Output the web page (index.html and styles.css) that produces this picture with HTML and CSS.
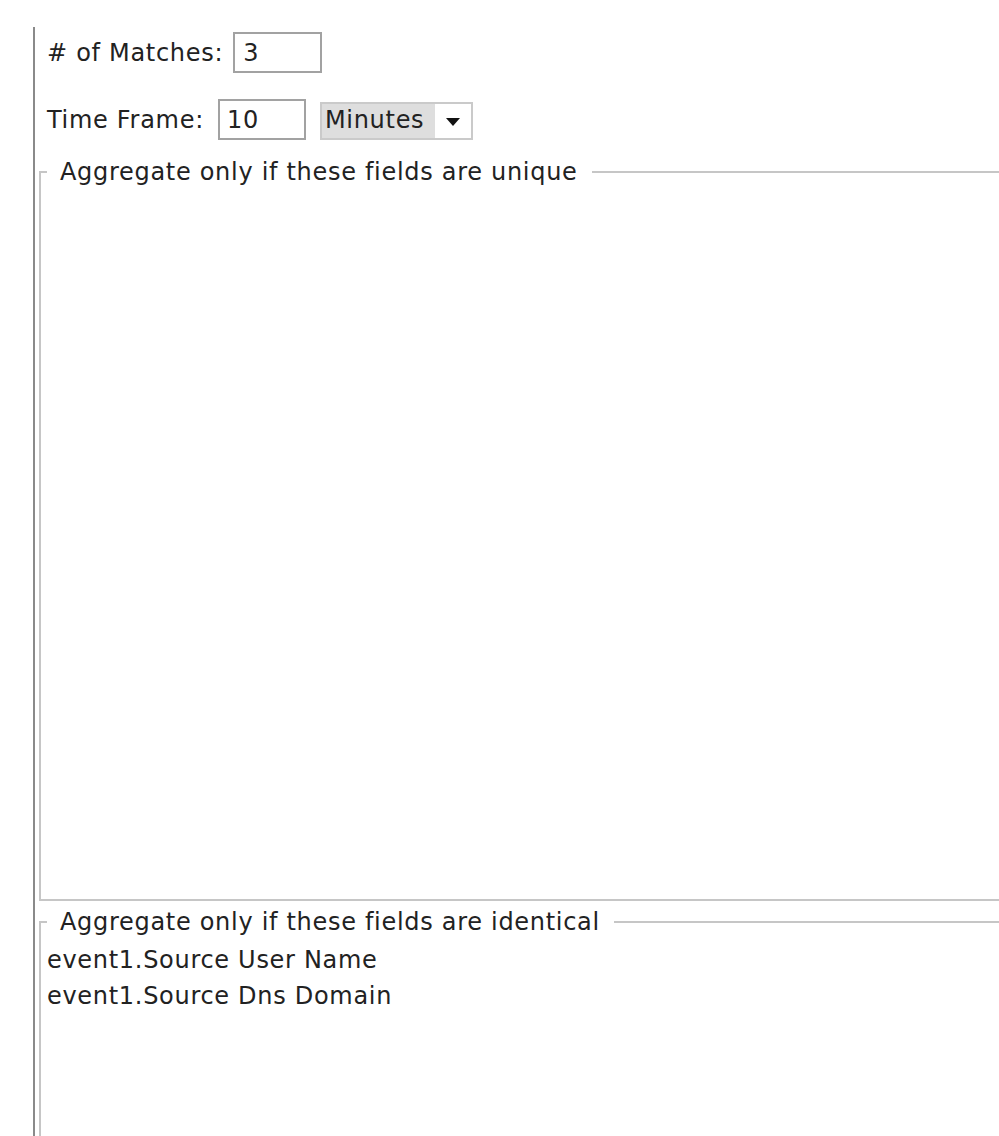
FILE: index.html
```html
<!DOCTYPE html>
<html>
<head>
<meta charset="utf-8">
<link rel="stylesheet" href="styles.css">
</head>
<body>
<div class="frame">
  <div class="row row-first">
    <span class="label">#&nbsp;of Matches:</span>
    <div class="field field-matches">3</div>
  </div>
  <div class="row row-second">
    <span class="label">Time Frame:</span>
    <div class="field field-time">10</div>
    <div class="combo">
      <span class="combo-value">Minutes</span>
      <span class="combo-arrow"><svg width="14" height="8" viewBox="0 0 14 8"><polygon points="0,0 14,0 7,8" fill="#111"/></svg></span>
    </div>
  </div>
  <div class="group group-unique">
    <div class="group-title">
      <span class="tick"></span>
      <span class="title-text">Aggregate only if these fields are unique</span>
      <span class="rule"></span>
    </div>
    <div class="group-body body-unique"></div>
  </div>
  <div class="group group-identical">
    <div class="group-title">
      <span class="tick"></span>
      <span class="title-text">Aggregate only if these fields are identical</span>
      <span class="rule"></span>
    </div>
    <div class="group-body body-identical">
      <div class="item">event1.Source User Name</div>
      <div class="item">event1.Source Dns Domain</div>
    </div>
  </div>
</div>
</body>
</html>
```
FILE: styles.css
```css
html, body {
  margin: 0;
  padding: 0;
  background: #ffffff;
}
body {
  height: 1136px;
  overflow: hidden;
  padding-top: 27px;
  box-sizing: border-box;
  font-family: "DejaVu Sans", "Liberation Sans", sans-serif;
  font-size: 24px;
  line-height: 28px;
  letter-spacing: 0.7px;
  color: #222222;
}
.frame {
  margin-left: 33px;
  border-left: 2px solid #8a8a8a;
  height: 1109px;
  display: flex;
  flex-direction: column;
}
.row {
  display: flex;
  align-items: baseline;
  padding-left: 12px;
}
.row-first {
  margin-top: 5px;
}
.row-second {
  margin-top: 26px;
}
.label {
  white-space: nowrap;
}
.field {
  box-sizing: border-box;
  height: 41px;
  border: 2px solid #a2a2a2;
  padding: 5px 7px 4px 8px;
  background: #ffffff;
}
.field-matches {
  width: 89px;
  margin-left: 10px;
}
.field-time {
  width: 88px;
  margin-left: 14px;
  padding-left: 7px;
}
.combo {
  align-self: flex-end;
  box-sizing: border-box;
  width: 153px;
  height: 38px;
  margin-left: 14px;
  border: 2px solid #cacaca;
  display: flex;
}
.combo-value {
  flex: 1;
  background: #dedede;
  padding: 2px 0 4px 3px;
}
.combo-arrow {
  width: 36px;
  display: flex;
  align-items: center;
  justify-content: center;
  background: #ffffff;
}
.combo-arrow svg {
  display: block;
  margin-top: 1px;
}
.group {
  margin-left: 4px;
  display: flex;
  flex-direction: column;
}
.group-unique {
  margin-top: 18px;
}
.group-identical {
  margin-top: 7px;
  flex: 1;
}
.group-title {
  display: flex;
  align-items: stretch;
  height: 28px;
}
.tick {
  width: 6px;
  margin-top: 13px;
  border-top: 2px solid #c6c6c6;
  border-left: 2px solid #c6c6c6;
}
.title-text {
  padding-left: 13px;
  padding-right: 14px;
  white-space: nowrap;
}
.rule {
  flex: 1;
  align-self: center;
  height: 2px;
  background: #c6c6c6;
}
.group-body {
  border-left: 2px solid #c6c6c6;
}
.body-unique {
  height: 713px;
  border-bottom: 2px solid #c6c6c6;
}
.body-identical {
  flex: 1;
  padding-top: 6px;
  padding-left: 6px;
}
.item {
  line-height: 36px;
  white-space: nowrap;
}
```
